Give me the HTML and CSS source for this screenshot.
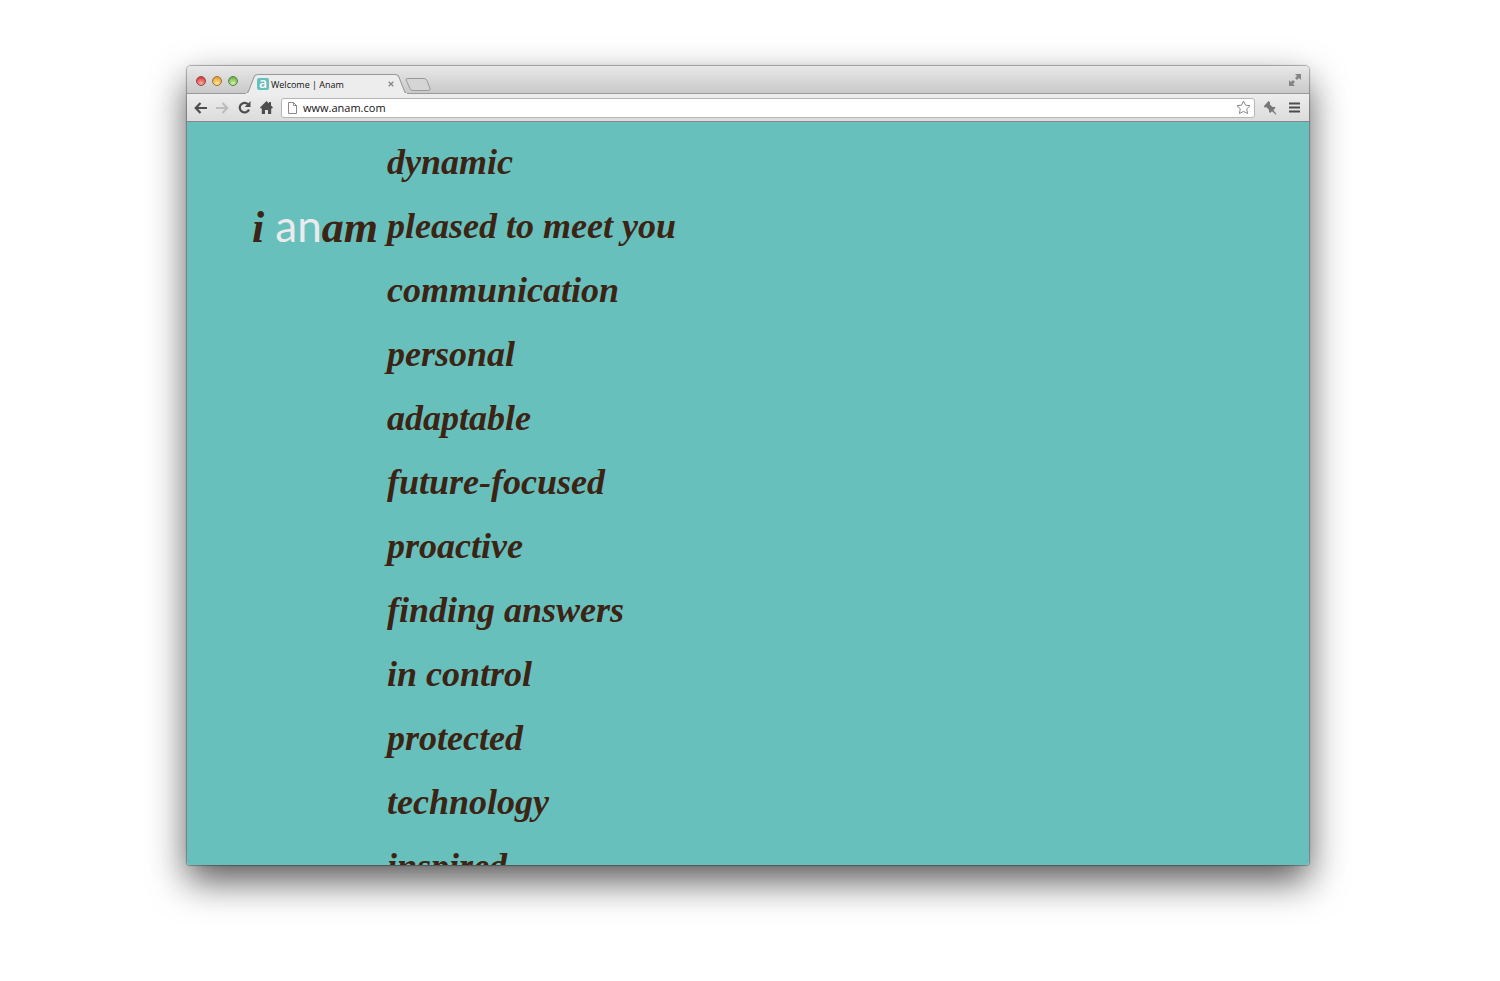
FILE: index.html
```html
<!DOCTYPE html>
<html lang="en">
  <head>
    <meta charset="UTF-8" />
    <meta name="viewport" content="width=device-width, initial-scale=1.0" />
    <title>Welcome | Anam</title>
    <link rel="stylesheet" href="styles.css">
  </head>
  <body>
    <div class="window">
      <header class="chrome">
        <div class="titlebar">
          <div class="lights">
            <button class="light red" aria-label="Close"></button>
            <button class="light yellow" aria-label="Minimize"></button>
            <button class="light green" aria-label="Zoom"></button>
          </div>
          <div class="tab">
            <svg class="tab-shape" viewBox="0 0 162 20" preserveAspectRatio="none" aria-hidden="true">
              <path d="M0 20C3 20 3 18 4 16L9 3Q10 .5 13 .5H149Q152 .5 153 3L158 16C159 18 159 20 162 20Z" fill="#ededed" stroke="#999" />
              <path d="M1 19.500H161" stroke="#ededed" />
            </svg>
            <span class="favicon">a</span>
            <span class="tab-title">Welcome | Anam</span>
            <button class="tab-close" aria-label="Close tab">
              <svg width="6" height="6" viewBox="0 0 6 6"><path d="M.7.7l4.600 4.600M5.300.7L.7 5.300" stroke="#888" stroke-width="1.300" /></svg>
            </button>
          </div>
          <button class="new-tab" aria-label="New tab">
            <svg width="26" height="13" viewBox="0 0 26 13"><path d="M3 .5H19Q21 .5 22 2.500L25 10.500Q25.500 12.500 23.500 12.500H8Q6 12.500 5 10.500L1 2Q.5.5 3 .5Z" fill="#d5d5d5" stroke="#999" /></svg>
          </button>
          <button class="fullscreen" aria-label="Full screen">
            <svg width="12" height="12" viewBox="0 0 12 12" fill="#848484"><path d="M6 0H12V6L10 4 8 6 6 4 8 2ZM0 6L2 8 4 6 6 8 4 10 6 12H0Z" /></svg>
          </button>
        </div>

        <nav class="toolbar">
          <button aria-label="Back">
            <svg width="13" height="12" viewBox="0 0 13 12" fill="none" stroke="#4d4d4d" stroke-width="2.200"><path d="M6.500 1L1.700 6l4.800 5M2 6h11" /></svg>
          </button>
          <button aria-label="Forward">
            <svg width="13" height="12" viewBox="0 0 13 12" fill="none" stroke="#bdbdbd" stroke-width="2"><path d="M6.500 1l4.800 5-4.800 5M11 6H0" /></svg>
          </button>
          <button aria-label="Reload">
            <svg width="13" height="13" viewBox="0 0 13 13"><path d="M10 3.300A4.800 4.800 0 1 0 11 8.500" fill="none" stroke="#4d4d4d" stroke-width="2.200" /><path d="M12.500 0v6H6.700Z" fill="#4d4d4d" /></svg>
          </button>
          <button aria-label="Home">
            <svg width="13" height="13" viewBox="0 0 13 13" fill="#4d4d4d"><path d="M6.500 0L9 2.500V1h2v3.500l2 2-1 1H11.200V13H8V9H5v4H1.800V7.500H1L0 6.500Z" /></svg>
          </button>
          <div class="address">
            <svg width="9" height="12" viewBox="0 0 9 12" fill="#fff" stroke="#8a8a8a"><path d="M.5.5H5.500L8.500 3.500V11.500H.5ZM5.500.5V3.500H8.500" /></svg>
            <input type="text" value="www.anam.com" aria-label="Address" />
            <button aria-label="Bookmark this page">
              <svg width="15" height="15" viewBox="0 0 15 15"><path d="M7.500 1L9.500 5.200 14 5.700 10.700 8.900 11.600 13.600 7.500 11.300 3.400 13.600 4.300 8.900 1 5.700 5.500 5.200Z" fill="#fff" stroke="#888" stroke-linejoin="round" /></svg>
            </button>
          </div>
          <div class="extras">
            <button aria-label="Pinned">
              <svg width="13" height="14" viewBox="0 0 13 14" fill="#777"><path d="M4.500 0L6 1.300 5.800 3.500 8.500 6l2-.2 1 1.200L9.300 9l3.200 4.300-.6.500L8 10.200 6.200 12 5 11l.1-2.100L2.600 6.300.5 6.500 0 5Z" /></svg>
            </button>
            <button aria-label="Menu">
              <svg width="11" height="11" viewBox="0 0 11 11"><path d="M0 1.500H11M0 5.500H11M0 9.500H11" stroke="#4d4d4d" stroke-width="2" /></svg>
            </button>
          </div>
        </nav>
      </header>

      <main class="page">
        <h1 class="intro">i <span class="logo">an</span>am</h1>
        <ul class="words">
          <li>dynamic</li>
          <li>pleased to meet you</li>
          <li>communication</li>
          <li>personal</li>
          <li>adaptable</li>
          <li>future-focused</li>
          <li>proactive</li>
          <li>finding answers</li>
          <li>in control</li>
          <li>protected</li>
          <li>technology</li>
          <li>inspired</li>
        </ul>
      </main>
    </div>
  </body>
</html>
```

FILE: styles.css
```css
*,
*::before,
*::after {
  box-sizing: border-box;
  margin: 0;
  padding: 0;
}
body {
  display: flex;
  height: 100vh;
  padding: 66px 191px 116px 187px;
  background-color: #fff;
  font-family: "Open Sans", "Noto Sans", sans-serif;
}
button {
  display: grid;
  place-content: center;
  border: none;
  background: none;
  cursor: pointer;
}
svg {
  display: block;
}

.window {
  flex: 1;
  min-width: 0;
  display: flex;
  flex-direction: column;
  overflow: hidden;
  border-radius: 4px 4px 3px 3px;
  box-shadow: 0 0 1px 1px rgba(0, 0, 0, 0.3), 0 16px 37px rgba(0, 0, 0, 0.66);
}

/* browser bar */
.titlebar {
  display: flex;
  align-items: flex-end;
  height: 28px;
  padding: 0 8px 0 9px;
  background: linear-gradient(#e8e8e8, #c9c9c9);
  border-bottom: 1px solid #999;
}
.lights {
  display: flex;
  gap: 6px;
  align-self: center;
  margin-right: 7px;
  padding-top: 2px;
}
.light {
  width: 10px;
  height: 10px;
  border: 1px solid #8a4a48;
  border-radius: 50%;
}
.red {
  background: radial-gradient(circle at 50% 80%, #ffb0a8, #e0403f 75%);
}
.yellow {
  border-color: #99713a;
  background: radial-gradient(circle at 50% 80%, #ffe9a0, #eda334 75%);
}
.green {
  border-color: #5b8048;
  background: radial-gradient(circle at 50% 80%, #d4f5a8, #70b54c 75%);
}
.tab {
  position: relative;
  display: flex;
  align-items: center;
  width: 163px;
  height: 20px;
  margin-bottom: -1px;
  padding: 0 13px 0 12px;
}
.tab-shape {
  position: absolute;
  inset: 0;
  width: 100%;
  height: 100%;
}
.favicon {
  position: relative;
  width: 12px;
  height: 12px;
  border-radius: 2px;
  background-color: #68c0bd;
  color: #fff;
  font-size: 14px;
  font-weight: 600;
  line-height: 9px;
  text-align: center;
}
.tab-title {
  position: relative;
  flex: 1;
  margin-left: 2px;
  color: #111;
  font-size: 9px;
  white-space: nowrap;
}
.tab-close {
  position: relative;
  width: 8px;
  height: 10px;
}
.new-tab {
  margin: 0 0 2px -3px;
}
.fullscreen {
  align-self: center;
  margin-left: auto;
}
.toolbar {
  display: flex;
  align-items: center;
  gap: 9px;
  height: 28px;
  padding: 0 9px 0 7px;
  background: linear-gradient(#ededed, #dcdcdc);
  border-bottom: 1px solid #888;
}
.address {
  flex: 1;
  display: flex;
  align-items: center;
  gap: 6px;
  height: 20px;
  margin-left: -1px;
  padding: 0 3px 0 6px;
  border: 1px solid #b5b5b5;
  border-radius: 3px;
  background-color: #fff;

  & input {
    flex: 1;
    min-width: 0;
    border: none;
    outline: none;
    background: none;
    color: #111;
    font-family: inherit;
    font-size: 11px;
  }
}
.extras {
  display: flex;
  align-items: center;
  gap: 12px;
}

/* page */
.page {
  flex: 1;
  min-height: 0;
  display: grid;
  grid-template-columns: 191px 1fr;
  column-gap: 9px;
  align-items: start;
  overflow: hidden;
  background-color: #68c0bd;
  color: #3c2415;
  font-family: "Liberation Serif", serif;
  font-size: 36px;
  font-style: italic;
  font-weight: 700;
  line-height: 64px;
}
.intro {
  margin-top: 71px;
  font-size: 44px;
  line-height: 64px;
  text-align: right;
  white-space: nowrap;
}
.logo {
  color: #ebebeb;
  font-family: Lato, sans-serif;
  font-style: normal;
  font-weight: 400;
}
.words {
  margin-top: 8px;
  list-style: none;
  white-space: nowrap;
}
```
